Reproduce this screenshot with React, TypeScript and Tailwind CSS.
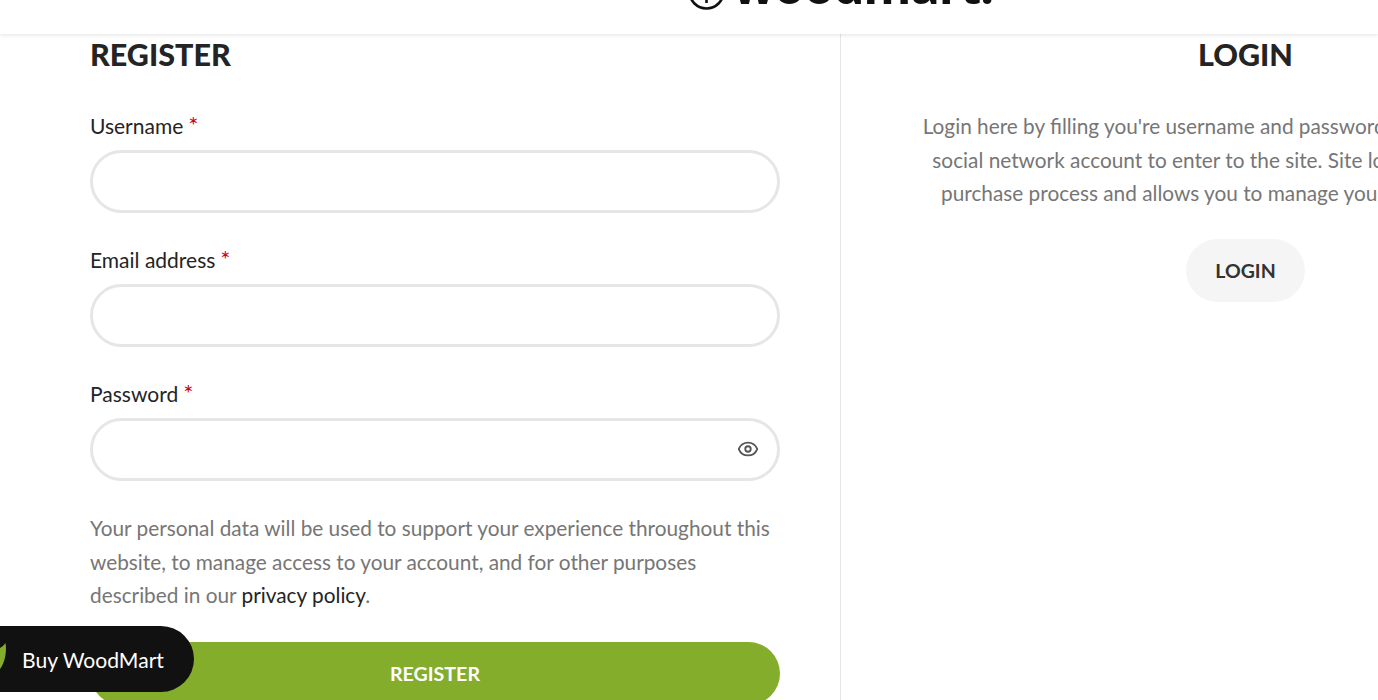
import { Eye } from "lucide-react";

function Field({ label, eye }: { label: string; eye?: boolean }) {
  return (
    <div className="mb-[30px]">
      <label className="block h-[34px] leading-[34px] text-[#242424]">
        {label}
        <span className="ml-[5px] text-[24px] leading-[20px] text-[#d0021b]">*</span>
      </label>
      <div className="relative mt-[7px] h-[63px] rounded-full border-[3px] border-[#e6e6e6] bg-white">
        {eye && (
          <Eye size={22} strokeWidth={2} className="absolute right-[18px] top-[17px] text-[#555555]" />
        )}
      </div>
    </div>
  );
}

export default function App() {
  return (
    <div className="relative h-[700px] w-[1378px] overflow-hidden bg-white font-['Lato',sans-serif] text-[21px]">
      {/* Header */}
      <header className="relative z-10 flex h-[34px] justify-start overflow-hidden bg-white pl-[688px] shadow-[0_1px_4px_rgba(0,0,0,0.12)]">
        <div className="-mt-[27px] flex h-[36px] items-center gap-[8px]">
          <svg width="37" height="37" viewBox="0 0 37 37" fill="none" className="shrink-0">
            <circle cx="18.5" cy="18.5" r="17" stroke="#111" strokeWidth="2.6" />
            <path d="M18.5 0v30" stroke="#111" strokeWidth="2.6" />
          </svg>
          <span className="-mt-[13px] font-['Noto_Sans',sans-serif] text-[49px] font-bold leading-[36px] tracking-[-0.9px] text-[#111]">
            woodmart.
          </span>
        </div>
      </header>

      <main className="flex h-[666px]">
        {/* Register */}
        <section className="w-[841px] shrink-0 border-r border-[#e6e6e6] pl-[90px] pr-[60px]">
          <h2 className="mb-[35px] text-[30.5px] font-black leading-[40px] text-[#242424]">REGISTER</h2>
          <Field label="Username" />
          <Field label="Email address" />
          <Field label="Password" eye />
          <p className="text-[20.8px] leading-[33.5px] text-[#767676]">
            Your personal data will be used to support your experience throughout this website, to manage access to
            your account, and for other purposes described in our{" "}
            <span className="text-[#242424]">privacy policy</span>.
          </p>
          <button className="mt-[30px] h-[63px] w-full rounded-full bg-[#83ad2b] pt-[1px] text-[19.6px] font-bold text-white">
            REGISTER
          </button>
        </section>

        {/* Login */}
        <section className="flex w-[809px] shrink-0 flex-col items-center">
          <h2 className="mb-[35px] text-[30.5px] font-black leading-[40px] text-[#242424]">LOGIN</h2>
          <p className="text-center text-[20.8px] leading-[33.5px] text-[#767676]">
            Login here by filling you're username and password or use your existing
            <br />
            social network account to enter to the site. Site login will simplify the
            <br />
            purchase process and allows you to manage your personal account.
          </p>
          <button className="mt-[29px] h-[63px] w-[119px] rounded-full bg-[#f5f5f5] pt-[1px] text-[19.5px] font-bold text-[#333]">
            LOGIN
          </button>
        </section>
      </main>

      {/* Floating buy button */}
      <div className="absolute left-0 top-[626px] flex h-[66px] w-[194px] items-center rounded-r-full bg-[#111] pl-[22px] pt-[1px] text-[21.1px] text-white">
        <svg width="8" height="28" viewBox="0 0 8 28" className="absolute left-0 top-[17px]">
          <path d="M0 5C2 4 4 2 5.5 0C7 8 5 20 0 26Z" fill="#83ad2b" />
        </svg>
        Buy WoodMart
      </div>
    </div>
  );
}
